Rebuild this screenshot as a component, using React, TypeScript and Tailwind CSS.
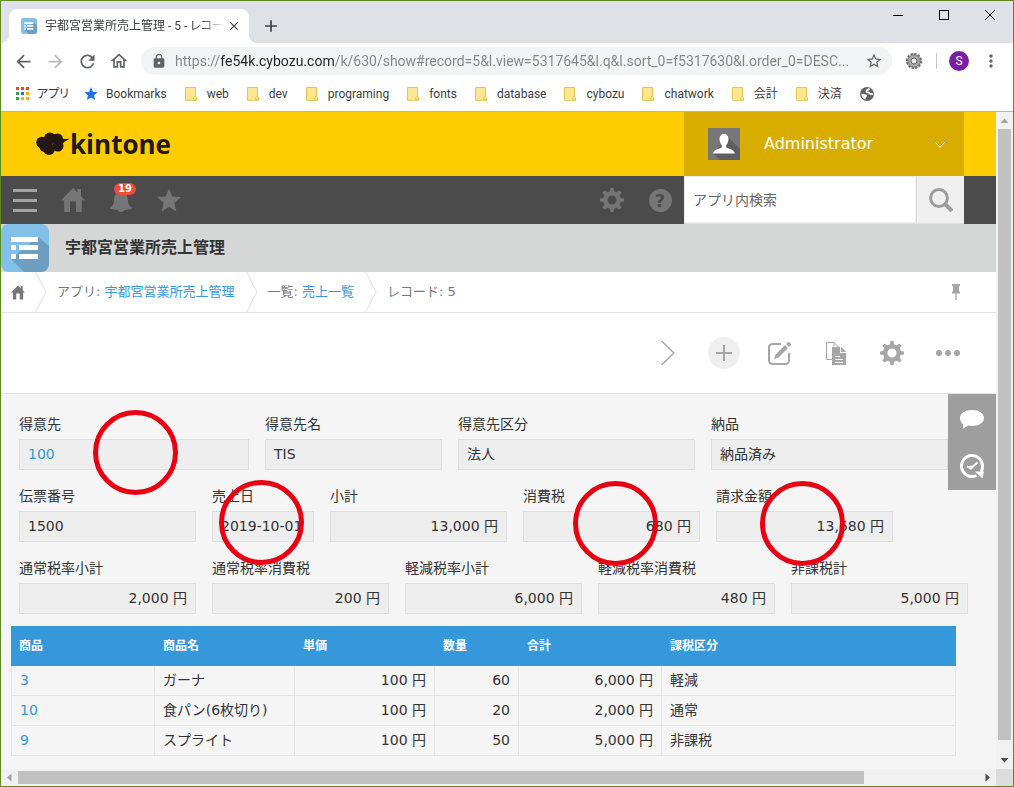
import type { ReactNode } from "react";
import {
    MdAdd,
    MdArrowBack,
    MdArrowForward,
    MdClose,
    MdLock,
    MdMoreVert,
    MdOutlineHome,
    MdRefresh,
    MdStar,
    MdStarBorder,
} from "react-icons/md";

type FieldData = { label: string; value: string; width: string; link?: boolean; right?: boolean };

const bookmarks = ["web", "dev", "programing", "fonts", "database", "cybozu", "chatwork", "会計", "決済"];

const fieldRows: FieldData[][] = [
    [
        { label: "得意先", value: "100", width: "w-[230px]", link: true },
        { label: "得意先名", value: "TIS", width: "w-[177px]" },
        { label: "得意先区分", value: "法人", width: "w-[237px]" },
        { label: "納品", value: "納品済み", width: "w-[237px]" },
    ],
    [
        { label: "伝票番号", value: "1500", width: "w-[177px]" },
        { label: "売上日", value: "2019-10-01", width: "w-[102px]" },
        { label: "小計", value: "13,000 円", width: "w-[177px]", right: true },
        { label: "消費税", value: "680 円", width: "w-[177px]", right: true },
        { label: "請求金額", value: "13,680 円", width: "w-[177px]", right: true },
    ],
    [
        { label: "通常税率小計", value: "2,000 円", width: "w-[177px]", right: true },
        { label: "通常税率消費税", value: "200 円", width: "w-[177px]", right: true },
        { label: "軽減税率小計", value: "6,000 円", width: "w-[177px]", right: true },
        { label: "軽減税率消費税", value: "480 円", width: "w-[177px]", right: true },
        { label: "非課税計", value: "5,000 円", width: "w-[177px]", right: true },
    ],
];

const columns = [
    { title: "商品", width: "w-36" },
    { title: "商品名", width: "w-[140px]" },
    { title: "単価", width: "w-[140px]" },
    { title: "数量", width: "w-[84px]" },
    { title: "合計", width: "w-[143px]" },
    { title: "課税区分", width: "w-[294px]" },
];

const items = [
    { id: "3", name: "ガーナ", price: "100 円", count: "60", total: "6,000 円", tax: "軽減" },
    { id: "10", name: "食パン(6枚切り)", price: "100 円", count: "20", total: "2,000 円", tax: "通常" },
    { id: "9", name: "スプライト", price: "100 円", count: "50", total: "5,000 円", tax: "非課税" },
];

const marks = ["left-[92px] top-4", "left-[218px] top-[86px]", "left-[572px] top-[87px]", "left-[759px] top-[87px]"];

const AppIcon = ({ className }: { className: string }) => (
    <svg className={className} viewBox="0 0 48 48" aria-hidden="true">
        <rect width="48" height="48" rx="8" fill="#83c0e8" />
        <path d="M37 13l11 9v18a8 8 0 0 1-8 8H23L10 35z" fill="#6d9fc3" />
        <path d="M10 13h27v5H10zM10 21h5v5h-5zM18 21h19v5H18zM10 30h5v5h-5zM18 30h19v5H18z" fill="#fff" />
    </svg>
);

const GearIcon = ({ className }: { className: string }) => (
    <svg className={className} viewBox="0 0 24 24" aria-hidden="true">
        <circle cx="12" cy="12" r="6.8" fill="none" stroke="currentColor" strokeWidth="4.4" />
        {[0, 45, 90, 135, 180, 225, 270, 315].map((angle) => (
            <path key={angle} d="M9.9 4L10.4 0h3.2l.5 4z" fill="currentColor" transform={`rotate(${angle} 12 12)`} />
        ))}
    </svg>
);

const HouseIcon = ({ className }: { className: string }) => (
    <svg className={className} viewBox="0 0 24 24" aria-hidden="true">
        <path d="M12 0l4.500 4.500V1H20v7l4 4.200h-3.200V24H15V13.500H9V24H3.200V12.200H0z" fill="currentColor" />
    </svg>
);

const FolderIcon = () => (
    <svg className="w-4 h-4" viewBox="0 0 16 16" aria-hidden="true">
        <path d="M.5 1.500h10v9l1 .8v3H.5z" fill="#ffe693" stroke="#e8c353" />
        <path d="M8.800 14v-2.700l1.300-1.300 1.400 1.300V14z" fill="#ffe693" stroke="#e8c353" />
    </svg>
);

const GlobeIcon = () => (
    <svg className="w-[14px] h-[14px]" viewBox="0 0 14 14" aria-hidden="true">
        <circle cx="7" cy="7" r="7" fill="#5f6368" />
        <path d="M9.500 1.500C8.500 3 6.800 2.800 6.500 4c-.3 1.300 1 1.500 2.300 1.700 1 .2 1 1.300 2 1.300h2" fill="none" stroke="#fff" strokeWidth="1.800" />
        <path d="M1.400 6.500c1.500 0 2.400.9 4.200.9 1.600 0 2 1.600.9 2.400-.8.600-.9 1.200-.9 2.700C3 12 1.200 9.500 1.400 6.500z" fill="#fff" />
    </svg>
);

const ExtensionIcon = () => (
    <svg className="w-4 h-4" viewBox="0 0 16 16" aria-hidden="true">
        <circle cx="8" cy="8" r="7" fill="none" stroke="#666" strokeWidth="2" strokeDasharray="2.400 1.260" />
        <circle cx="8" cy="8" r="6.200" fill="#a8a8a8" stroke="#777" />
        <circle cx="8" cy="8" r="3" fill="#e4e4e4" stroke="#666" />
        <circle cx="8" cy="8" r="1.200" fill="#fff" />
    </svg>
);

const TabStrip = () => (
    <div className="flex h-[42px] bg-[#dee1e6] text-[#3c4043]">
        <svg className="w-2 h-2 self-end" viewBox="0 0 8 8" aria-hidden="true"><path d="M8 0v8H0a8 8 0 0 0 8-8z" fill="#fff" /></svg>
        <div className="flex items-center w-60 h-[34px] mt-2 pl-3 pr-[6px] rounded-t-lg bg-white">
            <AppIcon className="w-4 h-4 shrink-0" />
            <span className="ml-2 whitespace-nowrap text-xs [mask-image:linear-gradient(to_right,#000_88%,transparent)]">宇都宮営業所売上管理 - 5 - レコー</span>
            <button type="button" aria-label="タブを閉じる" className="flex items-center justify-center w-5 h-5 ml-auto shrink-0"><MdClose className="w-[14px] h-[14px]" /></button>
        </div>
        <svg className="w-2 h-2 self-end" viewBox="0 0 8 8" aria-hidden="true"><path d="M0 0v8h8a8 8 0 0 1-8-8z" fill="#fff" /></svg>
        <button type="button" aria-label="新しいタブ" className="flex items-center justify-center w-7 mt-2"><MdAdd className="w-5 h-5" /></button>
        <div className="flex h-7 ml-auto text-black">
            <button type="button" aria-label="最小化" className="flex items-center justify-center w-[46px]"><span className="w-[10px] h-px bg-black" /></button>
            <button type="button" aria-label="最大化" className="flex items-center justify-center w-[46px]"><span className="w-[10px] h-[10px] border border-black" /></button>
            <button type="button" aria-label="閉じる" className="flex items-center justify-center w-[46px]">
                <svg className="w-[10px] h-[10px]" viewBox="0 0 10 10" aria-hidden="true"><path d="M0 0l10 10M10 0L0 10" stroke="#000" /></svg>
            </button>
        </div>
    </div>
);

const NavButton = ({ label, children }: { label: string; children: ReactNode }) => (
    <button type="button" aria-label={label} className="flex items-center justify-center w-7 h-7 shrink-0 text-[#5f6368]">{children}</button>
);

const AddressBar = () => (
    <div className="flex items-center h-9 pl-2 pr-2 bg-white">
        <div className="flex gap-1">
            <NavButton label="戻る"><MdArrowBack className="w-[21px] h-[21px]" /></NavButton>
            <NavButton label="進む"><MdArrowForward className="w-[21px] h-[21px] text-[#babcbe]" /></NavButton>
            <NavButton label="再読み込み"><MdRefresh className="w-[21px] h-[21px]" /></NavButton>
            <NavButton label="ホーム"><MdOutlineHome className="w-5 h-5" /></NavButton>
        </div>
        <div className="flex items-center flex-1 h-7 ml-2 pl-[10px] pr-1 rounded-full bg-[#f1f3f4]">
            <MdLock className="w-4 h-4 shrink-0 text-[#5f6368]" />
            <input
                type="text"
                aria-label="アドレス"
                defaultValue="https://fe54k.cybozu.com/k/630/show#record=5&l.view=5317645&l.q&l.sort_0=f5317630&l.order_0=DESC..."
                className="flex-1 min-w-0 ml-2 text-sm text-transparent bg-clip-text bg-[linear-gradient(to_right,#80868b_45px,#202124_45px,#202124_159px,#80868b_159px)] outline-none"
            />
            <NavButton label="ブックマークに追加"><MdStarBorder className="w-[18px] h-[18px]" /></NavButton>
        </div>
        <div className="flex items-center">
            <button type="button" aria-label="拡張機能" className="ml-[14px]"><ExtensionIcon /></button>
            <span className="w-px h-4 ml-[14px] bg-[#c6c8cb]" />
            <button type="button" aria-label="プロフィール" className="w-5 h-5 ml-3 rounded-full bg-[#7b1fa2] text-xs text-white">S</button>
            <button type="button" aria-label="メニュー" className="flex items-center justify-center w-7 ml-2 text-[#5f6368]"><MdMoreVert className="w-5 h-5" /></button>
        </div>
    </div>
);

const BookmarkBar = () => (
    <nav aria-label="ブックマーク" className="flex items-center h-[33px] pb-[3px] pl-[15px] gap-[18px] overflow-hidden whitespace-nowrap bg-white border-b border-[#b6b6b6] text-xs leading-4 text-[#3c4043]">
        <a href="#apps" className="flex items-center gap-2">
            <svg className="w-[13px] h-[13px]" viewBox="0 0 13 13" aria-hidden="true">
                <path d="M0 0h3v3H0zM5 0h3v3H5zM10 0h3v3h-3z" fill="#ea4335" />
                <path d="M0 5h3v3H0zM0 10h3v3H0z" fill="#34a058" />
                <path d="M5 5h3v3H5z" fill="#1a73e8" />
                <path d="M10 5h3v3h-3zM5 10h3v3H5zM10 10h3v3h-3z" fill="#f9ab00" />
            </svg>
            アプリ
        </a>
        <a href="#bookmarks" className="flex items-center gap-[7px] -ml-1">
            <MdStar className="w-4 h-4 text-[#1a73e8]" />
            Bookmarks
        </a>
        {bookmarks.map((name) => (
            <a key={name} href={`#${name}`} className="flex items-center gap-[6px]">
                <FolderIcon />
                {name}
            </a>
        ))}
        <GlobeIcon />
    </nav>
);

const KintoneHeader = () => (
    <header className="flex h-16 pr-8 bg-[#ffcc00]">
        <a href="#portal" className="flex items-center ml-[35px] text-[#231815]">
            <svg className="w-[34px] h-6" viewBox="0 0 34 24" aria-hidden="true">
                <g fill="currentColor">
                    <circle cx="6" cy="10.500" r="5.800" />
                    <circle cx="14" cy="6.500" r="6" />
                    <circle cx="21.500" cy="7" r="5.500" />
                    <circle cx="22" cy="14" r="5.500" />
                    <circle cx="13" cy="17" r="6" />
                    <circle cx="8" cy="15.500" r="4.300" />
                    <path d="M23 5l5 2 6-.2-6 3.200-2.500 4z" />
                </g>
            </svg>
            <span className="font-['Open_Sans','Noto_Sans_CJK_JP',sans-serif] text-[26px] leading-8 font-bold">kintone</span>
        </a>
        <button type="button" className="flex items-center w-[280px] ml-auto px-6 bg-[#d8ad00] text-white">
            <svg className="w-8 h-8" viewBox="0 0 32 32" aria-hidden="true">
                <path d="M0 0h32v32H0z" fill="#777" />
                <path d="M19 8l13 13v11H12l-6-6z" fill="#5f5f5f" />
                <path d="M16 6c3 0 4.500 2 4.500 5 0 2.500-1 5-2.300 6v2.500c3 1.500 7.800 2 8.800 6H5c1-4 5.800-4.500 8.800-6V17c-1.300-1-2.300-3.500-2.300-6 0-3 1.500-5 4.500-5z" fill="#fff" />
            </svg>
            <span className="ml-6 text-base">Administrator</span>
            <svg className="w-3 h-[7px] ml-auto mr-[-6px]" viewBox="0 0 12 7" aria-hidden="true"><path d="M0 0l6 6.300L12 0" fill="none" stroke="#fff" /></svg>
        </button>
    </header>
);

const GlobalNav = () => (
    <nav className="flex h-12 pr-8 bg-[#4b4b4b] text-[#757575]">
        <button type="button" aria-label="メニュー" className="flex flex-col items-center justify-center gap-[7px] w-12">
            <span className="w-6 h-[3px] bg-[#a3a3a3]" />
            <span className="w-6 h-[3px] bg-[#a3a3a3]" />
            <span className="w-6 h-[3px] bg-[#a3a3a3]" />
        </button>
        <a href="#home" aria-label="ポータル" className="flex items-center justify-center w-12"><HouseIcon className="w-6 h-6" /></a>
        <button type="button" aria-label="通知" className="relative flex items-center justify-center w-12">
            <svg className="w-6 h-6" viewBox="0 0 24 24" aria-hidden="true">
                <path d="M12 1.500c1.300 0 2 .8 2.200 2C18 5 18.500 8 18.800 12c.3 4 1.500 6 4.700 8-1 1.300-5 1.800-8 2-.5 1.300-1.800 2-3.500 2s-3-.7-3.500-2c-3-.2-7-.7-8-2 3.200-2 4.400-4 4.700-8 .3-4 .8-7 4.600-8.500.2-1.200.9-2 2.200-2z" fill="currentColor" />
            </svg>
            <span className="absolute left-[17px] top-[7px] w-[22px] h-3 rounded-full bg-[#e74c3c] text-[10px] leading-3 font-bold text-white">19</span>
        </button>
        <button type="button" aria-label="お気に入り" className="flex items-center justify-center w-12">
            <svg className="w-6 h-6" viewBox="0 0 24 24" aria-hidden="true"><path d="M12 .5l3.300 7.900 8.700.7-6.600 5.700 2 8.700L12 18.900l-7.400 4.600 2-8.700L0 9.100l8.700-.7z" fill="currentColor" /></svg>
        </button>
        <button type="button" aria-label="設定" className="flex items-center justify-center w-12 ml-auto"><GearIcon className="w-6 h-6" /></button>
        <button type="button" aria-label="ヘルプ" className="flex items-center justify-center w-12">
            <span className="w-[23px] h-[23px] rounded-full bg-[#757575] text-lg leading-6 font-bold text-[#4b4b4b]">?</span>
        </button>
        <form className="flex w-[280px] border-b border-[#e3e3e3]">
            <input type="search" aria-label="アプリ内検索" placeholder="アプリ内検索" className="w-[232px] px-2 bg-white border border-[#eee] text-sm placeholder:text-[#666] outline-none" />
            <button type="submit" aria-label="検索" className="flex items-center justify-center flex-1 border-l border-[#ddd] bg-[#efefef]">
                <svg className="w-6 h-6" viewBox="0 0 24 24" aria-hidden="true">
                    <circle cx="10" cy="10" r="8.400" fill="none" stroke="#9c9c9c" strokeWidth="3" />
                    <path d="M16 16l7 7" stroke="#9c9c9c" strokeWidth="4" />
                </svg>
            </button>
        </form>
    </nav>
);

const Separator = () => (
    <svg className="w-3 h-10 shrink-0" viewBox="0 0 12 40" aria-hidden="true"><path d="M.5 0l10.500 20L.5 40" fill="none" stroke="#dde0e0" /></svg>
);

const Breadcrumb = () => (
    <nav aria-label="パンくずリスト" className="flex items-center h-[41px] pr-9 bg-white border-b border-[#e3e5e5] text-[13px] text-[#777]">
        <a href="#home" aria-label="ホーム" className="mx-[10px]"><HouseIcon className="w-[14px] h-[15px]" /></a>
        <Separator />
        <span className="ml-[10px] mr-[11px]">アプリ: <a href="#app" className="text-[#3498db]">宇都宮営業所売上管理</a></span>
        <Separator />
        <span className="ml-[10px] mr-[11px]">一覧: <a href="#view" className="text-[#3498db]">売上一覧</a></span>
        <Separator />
        <span className="ml-[10px]">レコード: 5</span>
        <button type="button" aria-label="固定する" className="ml-auto">
            <svg className="w-2 h-4" viewBox="0 0 8 16" aria-hidden="true"><path d="M0 0h8v2H7v5l1 1v1.500H4.700V16H3.300V9.500H0V8l1-1V2H0z" fill="#a6a6a6" /></svg>
        </button>
    </nav>
);

const ToolButton = ({ label, children }: { label: string; children: ReactNode }) => (
    <button type="button" aria-label={label} className="flex items-center justify-center w-12 h-12 text-[#a6a6a6]">{children}</button>
);

const RecordToolbar = () => (
    <div className="flex items-center justify-end gap-2 h-[81px] pr-6 bg-white border-b border-[#e3e5e5]">
        <ToolButton label="次のレコード">
            <svg className="w-[14px] h-6" viewBox="0 0 14 24" aria-hidden="true"><path d="M.5 0L13 12 .5 24" fill="none" stroke="currentColor" strokeWidth="1.500" /></svg>
        </ToolButton>
        <ToolButton label="レコードを追加する">
            <span className="flex items-center justify-center w-8 h-8 rounded-full bg-[#efefef]">
                <svg className="w-4 h-4" viewBox="0 0 16 16" aria-hidden="true"><path d="M0 8h16M8 0v16" stroke="currentColor" strokeWidth="2" /></svg>
            </span>
        </ToolButton>
        <ToolButton label="レコードを編集する">
            <svg className="w-6 h-6" viewBox="0 0 24 24" aria-hidden="true">
                <path d="M13 3H4.500A3.500 3.500 0 0 0 1 6.500v13A3.500 3.500 0 0 0 4.500 23h13a3.500 3.500 0 0 0 3.500-3.500V12" fill="none" stroke="currentColor" strokeWidth="2" />
                <path d="M6 18l1.500-4.500L17 4l3 3-9.500 9.500zM18 3L20.500 .5 23.500 3.500 21 6z" fill="currentColor" />
            </svg>
        </ToolButton>
        <ToolButton label="レコードを再利用する">
            <svg className="w-6 h-6" viewBox="0 0 24 24" aria-hidden="true">
                <path d="M8 18.500H2.500v-17H10l5 5" fill="none" stroke="currentColor" />
                <path d="M10 1.500V5" stroke="currentColor" />
                <path d="M8 6h8v6h6v12H8z" fill="currentColor" />
                <path d="M17 5.500l5 5.500h-5z" fill="currentColor" />
                <path d="M11 15.500h5M11 18.500h8M11 21.500h8" stroke="#fff" />
            </svg>
        </ToolButton>
        <ToolButton label="設定"><GearIcon className="w-6 h-6" /></ToolButton>
        <ToolButton label="その他">
            <svg className="w-6 h-6" viewBox="0 0 24 24" aria-hidden="true"><g fill="currentColor"><circle cx="3" cy="12" r="3" /><circle cx="12" cy="12" r="3" /><circle cx="21" cy="12" r="3" /></g></svg>
        </ToolButton>
    </div>
);

const Field = ({ field }: { field: FieldData }) => (
    <div className={`shrink-0 ${field.width}`}>
        <dt className="mb-[3px] leading-6 whitespace-nowrap">{field.label}</dt>
        <dd className={`h-[31px] px-2 border border-[#dfdfdf] bg-[#eee] leading-7 whitespace-nowrap ${field.right ? "text-right" : ""}`}>
            {field.link ? <a href="#customer" className="text-[#3498db]">{field.value}</a> : field.value}
        </dd>
    </div>
);

const ItemTable = () => (
    <table className="table-fixed w-[945px] mt-3 ml-[10px] border-separate border-spacing-0 text-left">
        <thead>
            <tr className="h-10 bg-[#3498db] text-xs text-white">
                {columns.map((column) => (
                    <th key={column.title} scope="col" className={`px-2 font-bold ${column.width}`}>{column.title}</th>
                ))}
            </tr>
        </thead>
        <tbody>
            {items.map((item) => (
                <tr key={item.id} className="h-[30px] [&>td]:px-2 [&>td]:pb-[2px] [&>td]:border-r [&>td]:border-b [&>td]:border-[#e3e5e5] leading-5">
                    <td className="border-l"><a href={`#record-${item.id}`} className="text-[#3498db]">{item.id}</a></td>
                    <td>{item.name}</td>
                    <td className="text-right">{item.price}</td>
                    <td className="text-right">{item.count}</td>
                    <td className="text-right">{item.total}</td>
                    <td>{item.tax}</td>
                </tr>
            ))}
        </tbody>
    </table>
);

const RecordDetail = () => (
    <main className="relative flex-1 pt-[18px] pb-3 overflow-hidden bg-[#f5f5f5] text-sm text-[#333]">
        <div className="flex flex-col gap-[14px] pl-[18px]">
            {fieldRows.map((row) => (
                <dl key={row[0].label} className="flex gap-4">
                    {row.map((field) => <Field key={field.label} field={field} />)}
                </dl>
            ))}
        </div>
        <ItemTable />
        <aside className="absolute right-0 top-0 w-12 bg-[#9e9e9e] text-white">
            <button type="button" aria-label="コメント" className="flex items-center justify-center w-12 h-12">
                <svg className="w-6 h-6" viewBox="0 0 24 24" aria-hidden="true"><path d="M12 4c7 0 12 3.300 12 8s-5 8-12 8c-1.500 0-2.800-.1-4-.4L2.500 23l1-4.500C1.300 17 0 14.700 0 12c0-4.700 5-8 12-8z" fill="currentColor" /></svg>
            </button>
            <button type="button" aria-label="変更履歴" className="flex items-center justify-center w-12 h-12">
                <svg className="w-6 h-6" viewBox="0 0 24 24" aria-hidden="true">
                    <path d="M16.500 21.500A10.500 10.500 0 1 1 22.500 12.500c0 2-.5 4-1.500 5.500" fill="none" stroke="currentColor" strokeWidth="3" />
                    <path d="M15 17.500H24L22.500 24.500z" fill="currentColor" />
                    <path d="M7 12.500l4 1.500 6.500-5.500" fill="none" stroke="currentColor" strokeWidth="2" />
                    <circle cx="11" cy="13.500" r="2" fill="currentColor" />
                </svg>
            </button>
        </aside>
        {marks.map((mark) => (
            <span key={mark} className={`absolute w-[85px] h-[85px] rounded-full border-[5px] border-[#e60012] pointer-events-none ${mark}`} />
        ))}
    </main>
);

const VerticalScrollbar = () => (
    <div className="flex flex-col items-center w-[17px] bg-[#f1f1f1]">
        <svg className="w-[17px] h-[17px] shrink-0" viewBox="0 0 17 17" aria-hidden="true"><path d="M8.500 6.500l4 4.500h-8z" fill="#a3a3a3" /></svg>
        <div className="flex-1 w-full px-[2px]"><div className="h-[98%] bg-[#c1c1c1]" /></div>
        <svg className="w-[17px] h-[17px] shrink-0" viewBox="0 0 17 17" aria-hidden="true"><path d="M8.500 10.500l-4-4.500h8z" fill="#505050" /></svg>
        <div className="w-full h-[17px] bg-[#dcdcdc]" />
    </div>
);

const HorizontalScrollbar = () => (
    <div className="flex items-center h-[17px] bg-[#f1f1f1]">
        <svg className="w-[17px] h-[17px] shrink-0" viewBox="0 0 17 17" aria-hidden="true"><path d="M6 8.500l4.500-4v8z" fill="#a3a3a3" /></svg>
        <div className="flex-1"><div className="w-[88%] h-[13px] bg-[#c1c1c1]" /></div>
        <svg className="w-[17px] h-[17px] shrink-0" viewBox="0 0 17 17" aria-hidden="true"><path d="M11 8.500l-4.500-4v8z" fill="#505050" /></svg>
    </div>
);

const App = () => {
    return (
        <div className="flex flex-col min-h-screen border border-[#5b8c1e] bg-white">
            <div className="font-['Roboto','Noto_Sans_CJK_JP',sans-serif] [font-feature-settings:'palt']">
                <TabStrip />
                <AddressBar />
                <BookmarkBar />
            </div>
            <div className="flex flex-1 font-['DejaVu_Sans','Noto_Sans_CJK_JP',sans-serif]">
                <div className="flex flex-col flex-1 min-w-0">
                    <KintoneHeader />
                    <GlobalNav />
                    <div className="flex items-center h-12 bg-[#d5d7d6]">
                        <AppIcon className="w-12 h-12" />
                        <h1 className="ml-4 text-base font-bold text-[#333]">宇都宮営業所売上管理</h1>
                    </div>
                    <Breadcrumb />
                    <RecordToolbar />
                    <RecordDetail />
                    <HorizontalScrollbar />
                </div>
                <VerticalScrollbar />
            </div>
        </div>
    );
};

export default App;
